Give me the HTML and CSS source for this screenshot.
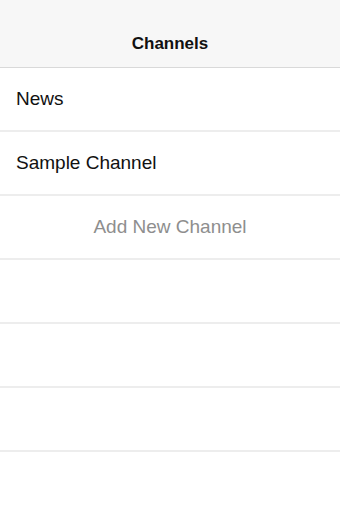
FILE: index.html
```html
<!DOCTYPE html>
<html>
<head>
<meta charset="utf-8">
<link rel="stylesheet" href="styles.css">
</head>
<body>
<div class="screen">
  <header class="navbar">
    <h1 class="title">Channels</h1>
  </header>
  <ul class="list">
    <li class="row">News</li>
    <li class="row">Sample Channel</li>
    <li class="row add">Add New Channel</li>
    <li class="row"></li>
    <li class="row"></li>
    <li class="row"></li>
  </ul>
</div>
</body>
</html>
```

FILE: styles.css
```css
html, body {
  margin: 0;
  padding: 0;
  background: #ffffff;
}
body {
  font-family: "Liberation Sans", Arial, sans-serif;
  color: #111111;
}
.screen {
  width: 340px;
  height: 510px;
  overflow: hidden;
  display: flex;
  flex-direction: column;
}
.navbar {
  height: 47px;
  padding-top: 20px;
  background: #f7f7f7;
  border-bottom: 1px solid #d9d9d9;
  display: flex;
  align-items: center;
  justify-content: center;
}
.title {
  margin: 0;
  font-size: 17px;
  font-weight: bold;
  color: #111111;
}
.list {
  list-style: none;
  margin: 0;
  padding: 0;
}
.row {
  height: 62px;
  border-bottom: 2px solid #ededed;
  display: flex;
  align-items: center;
  padding-left: 16px;
  font-size: 19px;
  color: #111111;
}
.row.add {
  justify-content: center;
  padding-left: 0;
  color: #8e8e8e;
}
```
